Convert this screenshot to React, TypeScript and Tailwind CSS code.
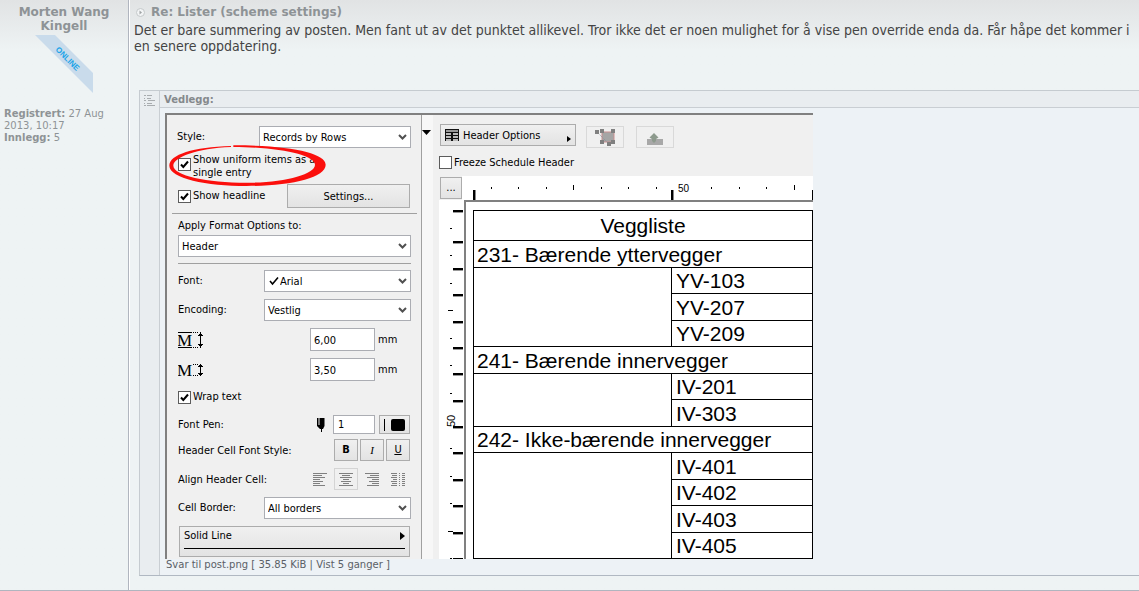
import React from "react";

function Chevron() {
  return (
    <svg className="pointer-events-none [grid-area:1/1] mr-1 justify-self-end" width="9" height="6" viewBox="0 0 9 6">
      <path d="M1 1 L4.5 4.5 L8 1" fill="none" stroke="#505050" strokeWidth="2" />
    </svg>
  );
}

function Select({ id, label, options, tick, className }: { id: string; label: string; options: string[]; tick?: boolean; className: string }) {
  return (
    <span className={"grid h-[22px] items-center " + className}>
      <select
        id={id}
        aria-label={label}
        className={"[grid-area:1/1] h-[22px] w-full appearance-none border border-[#abadb3] bg-white pt-px text-black " + (tick ? "pl-[15px]" : "pl-[3px]")}
      >
        {options.map((o) => (
          <option key={o}>{o}</option>
        ))}
      </select>
      {tick && (
        <svg className="pointer-events-none [grid-area:1/1] ml-[5px]" width="10" height="10" viewBox="0 0 10 10">
          <path d="M1 5 L3.5 8 L9 1.5" fill="none" stroke="#000" strokeWidth="1.6" />
        </svg>
      )}
      <Chevron />
    </span>
  );
}

function Check({ id, checked }: { id: string; checked?: boolean }) {
  return (
    <span className="grid size-[13px] shrink-0 place-items-center">
      <input id={id} type="checkbox" defaultChecked={checked} className="peer [grid-area:1/1] size-[13px] appearance-none border border-[#5c5c5c] bg-white" />
      <svg className="pointer-events-none invisible [grid-area:1/1] peer-checked:visible" width="9" height="9" viewBox="0 0 9 9">
        <path d="M1 4.5 L3.3 7 L8 1.5" fill="none" stroke="#000" strokeWidth="2" />
      </svg>
    </span>
  );
}

const btn = "flex items-center justify-center border border-[#acacac] bg-gradient-to-b from-[#f0f0f0] to-[#e3e3e3] text-black";

function SizeIcon({ full }: { full?: boolean }) {
  return (
    <svg width="26" height="18" viewBox="1 0 26 18" shapeRendering="crispEdges">
      <text x="0" y="15" fontSize="17" fontFamily="Liberation Serif, serif" fill="#000">M</text>
      {full ? (
        <g stroke="#000">
          <path d="M0 1.5H15M0 16.5H15" />
          <path d="M16 1.5H22M16 16.5H22" strokeDasharray="1 1" />
          <path d="M23.5 1V17M22 3.5H25M22 14.5H25M21 4.5H26M21 13.5H26" />
        </g>
      ) : (
        <g stroke="#000">
          <path d="M16 3.5H22M16 14.5H22" strokeDasharray="1 1" />
          <path d="M23.5 3V15M22 4.5H25M22 13.5H25M21 5.5H26M21 12.5H26" />
        </g>
      )}
    </svg>
  );
}

function AlignIcon({ d }: { d: string }) {
  return (
    <svg width="14" height="13" viewBox="0 0 14 13" shapeRendering="crispEdges">
      <path d={d} stroke="#808080" fill="none" />
    </svg>
  );
}

const alignments = [
  { name: "Align left", d: "M0 .5H14M0 2.5H9M0 4.5H12M0 6.5H7M0 8.5H10M0 10.5H7M0 12.5H12" },
  { name: "Align center", d: "M0 .5H14M3 2.5H11M1 4.5H13M4 6.5H10M2 8.5H12M4 10.5H10M0 12.5H14" },
  { name: "Align right", d: "M0 .5H14M5 2.5H14M2 4.5H14M7 6.5H14M4 8.5H14M7 10.5H14M2 12.5H14" },
  { name: "Justify", d: "M0 .5H6M1 2.5H6M0 4.5H6M2 6.5H6M0 8.5H6M1 10.5H6M0 12.5H6M8 .5H9M8 2.5H9M8 4.5H9M8 6.5H9M8 8.5H9M8 10.5H9M8 12.5H9M11 .5H14M11 2.5H14M11 4.5H14M11 6.5H14M11 8.5H14M11 10.5H14M11 12.5H14" },
];

function FormatPanel() {
  return (
    <div className="relative w-[254px] shrink-0 pt-[11px] pb-[2px]">
      <div className="flex items-center justify-between pr-[10px] pl-[10px]">
        <label htmlFor="style">Style:</label>
        <Select id="style" label="Style" options={["Records by Rows"]} className="w-[152px]" />
      </div>
      <div className="mt-[5px] flex items-start gap-[2px] pl-[11px]">
        <span className="pt-[5px]"><Check id="uniform" checked /></span>
        <label htmlFor="uniform" className="w-[124px] leading-[13px]">Show uniform items as a single entry</label>
      </div>
      <div className="mt-[5px] flex items-center justify-between pr-[11px] pl-[11px]">
        <span className="flex items-center gap-[2px]">
          <Check id="headline" checked />
          <label htmlFor="headline">Show headline</label>
        </span>
        <button className={btn + " h-6 w-[123px] pt-px"}>Settings...</button>
      </div>
      <hr className="mt-[5px] mr-[4px] ml-[5px] border-[#a0a0a0]" />
      <div className="pr-[10px] pl-[11px]">
        <label htmlFor="apply" className="mt-1 block h-4 leading-4">Apply Format Options to:</label>
        <Select id="apply" label="Apply Format Options to" options={["Header"]} className="mt-px w-full" />
        <hr className="mt-[6px] border-[#a0a0a0]" />
        <div className="mt-[6px] flex items-center justify-between">
          <label htmlFor="font">Font:</label>
          <Select id="font" label="Font" options={["Arial"]} tick className="w-[147px]" />
        </div>
        <div className="mt-[7px] flex items-center justify-between">
          <label htmlFor="enc">Encoding:</label>
          <Select id="enc" label="Encoding" options={["Vestlig"]} className="w-[147px]" />
        </div>
        <div className="mt-[7px] flex h-[23px] items-center">
          <label htmlFor="h1" className="flex-1" aria-label="Row height"><SizeIcon full /></label>
          <input id="h1" defaultValue="6,00" className="h-[23px] w-[65px] border border-[#abadb3] bg-white px-[3px] pt-px" />
          <span className="w-[36px] pl-[3px]">mm</span>
        </div>
        <div className="mt-[7px] flex h-[23px] items-center">
          <label htmlFor="h2" className="flex-1" aria-label="Letter height"><SizeIcon /></label>
          <input id="h2" defaultValue="3,50" className="h-[23px] w-[65px] border border-[#abadb3] bg-white px-[3px] pt-px" />
          <span className="w-[36px] pl-[3px]">mm</span>
        </div>
        <div className="mt-2 flex h-4 items-center gap-[2px]">
          <Check id="wrap" checked />
          <label htmlFor="wrap">Wrap text</label>
        </div>
        <div className="mt-[10px] flex h-[19px] items-center">
          <label htmlFor="pen" className="flex-1">Font Pen:</label>
          <svg width="8" height="14" viewBox="0 0 8 14" className="mr-[8px]">
            <path d="M0 0H1.5V7H2.5V0H7.5V8L6 11H5V14H4V11H3L0 8Z" />
          </svg>
          <input id="pen" defaultValue="1" className="h-[19px] w-[42px] border border-[#abadb3] bg-white px-[4px]" />
          <button aria-label="Pen color" className={btn + " ml-1 h-[19px] w-[31px] gap-[6px]"}>
            <span className="h-3 w-px bg-black" />
            <span className="h-3 w-[14px] rounded-[2px] bg-black" />
          </button>
          <span className="w-px" />
        </div>
        <div className="mt-[5px] flex h-[22px] items-center gap-[2px] pr-px">
          <span className="flex-1 pt-[2px]">Header Cell Font Style:</span>
          <button className={btn + " h-[22px] w-6 font-bold"}>B</button>
          <button className={btn + " h-[22px] w-6 font-['Liberation_Serif',serif] italic"}>I</button>
          <button className={btn + " h-[22px] w-6 underline"}>U</button>
        </div>
        <div className="mt-[7px] flex h-[22px] items-center gap-[2px] pr-px">
          <span className="flex-1 pt-[2px]">Align Header Cell:</span>
          {alignments.map((a, i) => (
            <button key={a.name} aria-label={a.name} className={"flex h-[22px] w-6 items-center justify-center border " + (i === 1 ? "border-[#d4d4d4]" : "border-transparent")}>
              <AlignIcon d={a.d} />
            </button>
          ))}
        </div>
        <div className="mt-[7px] flex items-center justify-between">
          <label htmlFor="border">Cell Border:</label>
          <Select id="border" label="Cell Border" options={["All borders"]} className="w-[147px]" />
        </div>
        <button className="mt-[7px] mr-px ml-px block h-[31px] w-[231px] border border-[#acacac] bg-gradient-to-b from-[#f0f0f0] to-[#e3e3e3] px-1 text-left">
          <span className="flex h-4 items-center justify-between">
            Solid Line
            <svg width="5" height="8" viewBox="0 0 5 8"><path d="M0 0L5 4L0 8Z" /></svg>
          </span>
          <span className="mt-1 mb-[7px] block h-px bg-black" />
        </button>
      </div>
      <svg className="pointer-events-none absolute top-[29px] left-[2px]" width="158" height="44" viewBox="117 178 474 132">
        <path fill="#fb0f0c" d="M303 184C190 187 118 210 118 243C118 281 230 304 350 304C480 304 587 280 587 240C587 205 480 182 310 182V187C450 187 555 212 555 240C555 270 460 294 350 294C230 294 130 272 130 243C130 218 200 191 303 187Z" />
      </svg>
    </div>
  );
}

const groups = [
  { title: "231- Bærende yttervegger", items: ["YV-103", "YV-207", "YV-209"] },
  { title: "241- Bærende innervegger", items: ["IV-201", "IV-303"] },
  { title: "242- Ikke-bærende innervegger", items: ["IV-401", "IV-402", "IV-403", "IV-405"] },
];

function Schedule() {
  const cell = "border-t border-l border-black p-0 text-left font-normal leading-[25px]";
  const row = "h-[26px] even:h-[27px]";
  return (
    <table className="w-[340px] table-fixed border-separate border-spacing-0 border-r border-b border-black font-['Liberation_Sans',Arial,sans-serif] text-[21px] text-black">
      <colgroup>
        <col className="w-[198px]" />
        <col />
      </colgroup>
      <tbody>
        <tr className="h-[30px]">
          <th colSpan={2} className="border-t border-l border-black p-0 text-center leading-[29px] font-normal">Veggliste</th>
        </tr>
        {groups.map((g) => (
          <React.Fragment key={g.title}>
            <tr className={row}>
              <th colSpan={2} className={cell + " pl-[3px]"}>{g.title}</th>
            </tr>
            {g.items.map((it, i) => (
              <tr key={it} className={row}>
                {i === 0 && <td rowSpan={g.items.length} className={cell} />}
                <td className={cell + " pl-1"}>{it}</td>
              </tr>
            ))}
          </React.Fragment>
        ))}
      </tbody>
    </table>
  );
}

const majorY = [10, 41, 68, 94, 121, 147, 173, 200, 226, 252, 279, 305, 332, 358];
const dotY = [28, 55, 83, 138, 165, 193, 248, 276, 303, 358];
const dotX = [29, 56, 84, 139, 166, 194, 249, 277, 304];

function SchedulePanel() {
  return (
    <div className="flex min-w-0 flex-1 flex-col pt-[9px]">
      <div className="flex items-start pl-[7px]">
        <button className={btn + " h-[22px] w-[136px] pr-1 pl-1"}>
          <svg width="14" height="12" viewBox="0 0 14 12" shapeRendering="crispEdges">
            <path d="M0 0H14V12H0Z" fill="#111" />
            <path d="M1 1H13V3H1Z" fill="#999" />
            <path d="M1 4H6V6H1ZM8 4H13V6H8ZM1 7H6V9H1ZM8 7H13V9H8ZM1 10H6V12H1ZM8 10H13V12H8Z" fill="#bbb" />
          </svg>
          <span className="flex-1 pt-px pl-1 text-left">Header Options</span>
          <svg className="mt-[7px]" width="4" height="6" viewBox="0 0 4 6"><path d="M0 0L4 3L0 6Z" /></svg>
        </button>
        <button aria-label="Select in model" className="mt-[2px] ml-[10px] flex h-[22px] w-[38px] items-center justify-center border border-[#d9d9d9]">
          <svg width="21" height="17" viewBox="0 0 21 17">
            <path d="M7 3H19V13H7Z" fill="#a5a5a5" stroke="#c98f8f" />
            <path d="M2 3L14 15" stroke="#8a8f9c" strokeDasharray="1 1" />
            <path d="M0 1H4V5H0ZM5 0H9V4H5ZM16 0H20V4H16ZM5 11H9V15H5ZM16 11H20V15H16ZM12 13H16V17H12Z" fill="#808080" />
          </svg>
        </button>
        <button aria-label="Zoom to element" className="mt-[2px] ml-[12px] flex h-[22px] w-[38px] items-center justify-center border border-[#d9d9d9] pt-[2px]">
          <svg width="16" height="13" viewBox="0 0 16 13">
            <path d="M0 7H16V13H0Z" fill="#a8a8a8" />
            <path d="M7 1L11.5 5.5L9 7V9L7 11L5 9V7L2.500 5.500Z" fill="#8d9a8d" />
          </svg>
        </button>
      </div>
      <div className="mt-2 flex h-[13px] items-center gap-[2px] pl-[6px]">
        <Check id="freeze" />
        <label htmlFor="freeze">Freeze Schedule Header</label>
      </div>
      <div className="mt-[7px] flex h-6 pl-[6px]">
        <button className={btn + " mt-px ml-px h-[22px] w-[22px] shrink-0"}>...</button>
        <svg className="flex-1 bg-white" width="351" height="24" viewBox="0 0 351 24" shapeRendering="crispEdges">
          {dotX.map((x) => <path key={x} d={`M${x} 11h1v2h-1z`} />)}
          <path d="M111 9h1v5h-1zM332 9h1v5h-1z" />
          <path d="M11 14h2v10h-2zM209 14h2v10h-2zM350 14h1v10h-1z" />
          <path d="M13 14h1v10h-1zM211 14h1v10h-1z" fill="#888" />
          <text x="216" y="16" fontSize="10" fontFamily="Liberation Sans, Arial, sans-serif">50</text>
        </svg>
      </div>
      <div className="flex pl-[6px]">
        <svg className="shrink-0 bg-white" width="25" height="359" viewBox="0 0 25 359" shapeRendering="crispEdges">
          {majorY.map((y) => <path key={y} d={`M14 ${y}h10v2h-10z`} />)}
          {majorY.map((y) => <path key={y} d={`M14 ${y + 2}h10v1h-10z`} fill="#999" />)}
          {dotY.map((y) => <path key={y} d={`M11 ${y}h2v1h-2z`} />)}
          <path d="M9 110h5v1h-5zM9 331h5v1h-5z" />
          <text transform="translate(16 227) rotate(-90)" fontSize="11" fontFamily="Liberation Sans, Arial, sans-serif">50</text>
        </svg>
        <div className="flex-1 border-t-2 border-l-2 border-[#808080] bg-white pt-2 pl-[7px]">
          <Schedule />
        </div>
      </div>
    </div>
  );
}

export default function App() {
  return (
    <div className="flex min-h-[591px] border-b border-[#b0b5bf] bg-[#eef3f4] bg-linear-to-b from-[#e1e3e4] via-[#eef3f4] via-[50px] to-[#eef3f4] font-['DejaVu_Sans',Verdana,sans-serif]">
      <aside className="w-[129px] shrink-0 border-r border-[#b0b5bf] pt-[5px] text-[11px] text-[#8e9396]">
        <div className="text-center text-[12px] leading-[14px] font-bold">Morten Wang<br />Kingell</div>
        <svg className="mt-[2px] ml-[35px] block" width="58" height="58" viewBox="0 0 58 58">
          <path d="M0 0H20L58 38V58Z" fill="#c9dbeb" />
          <text transform="translate(20 15) rotate(45)" fontSize="8" fontWeight="bold" fontFamily="Liberation Sans, Arial, sans-serif" fill="#20a4e8">ONLINE</text>
        </svg>
        <div className="mt-[15px] pl-1 text-[10px] leading-[12px]">
          <b>Registrert:</b> 27 Aug<br />2013, 10:17<br />
          <b>Innlegg:</b> 5
        </div>
      </aside>
      <main className="min-w-0 flex-1 border-l border-white pt-[4px]">
        <h1 className="flex h-4 items-center gap-[6px] pl-[6px] text-[12px] font-bold text-[#8e9396]">
          <svg width="9" height="9" viewBox="0 0 9 9">
            <circle cx="4.5" cy="4.5" r="4" fill="#f2f4f5" stroke="#c4c8ca" />
            <path d="M3.500 2.500L6 4.500L3.500 6.500Z" fill="#a0a4a6" />
          </svg>
          Re: Lister (scheme settings)
        </h1>
        <p className="mt-[2px] pr-1 pl-1 font-['DejaVu_Sans_Condensed',Verdana,sans-serif] text-[14px] leading-4 text-[#444]">
          Det er bare summering av posten. Men fant ut av det punktet allikevel. Tror ikke det er noen mulighet for å vise pen override enda da. Får håpe det kommer i en senere oppdatering.
        </p>
        <section className="mt-9 ml-[9px] flex border-y border-l border-[#c5cbd0] border-b-[#b0b8c2]">
          <div className="w-5 shrink-0 border-r border-[#c9ced3] bg-[#e9edf0] pt-1 pl-1">
            <svg width="11" height="11" viewBox="0 0 11 11" shapeRendering="crispEdges">
              <path d="M0 .5H2M3 .5H8M0 3.5H1M3 3.5H7M0 5.5H2M4 5.5H11M0 8.5H1M3 8.5H8M0 10.5H2M3 10.5H11" stroke="#a8acaf" />
            </svg>
          </div>
          <div className="min-w-0 flex-1 bg-[#edf2f6]">
            <h2 className="h-[17px] border-b border-[#c9ced3] bg-[#e9edf0] pt-px pl-1 text-[10px] leading-4 font-bold text-[#85898c]">Vedlegg:</h2>
            <figure className="mt-[5px] pl-[5px]">
              <div className="flex w-[648px] border-t-2 border-l-2 border-[#808080] bg-[#f0f0f0] font-['DejaVu_Sans_Condensed',Tahoma,sans-serif] text-[11px] leading-4 text-black">
                <FormatPanel />
                <div className="w-3 shrink-0 border-l border-[#a0a0a0] bg-[#f7f7f7] pt-[15px]">
                  <svg width="9" height="5" viewBox="0 0 9 5"><path d="M0 0H9L4.500 5Z" /></svg>
                </div>
                <SchedulePanel />
              </div>
              <figcaption className="h-4 pl-px text-[10px] leading-3 text-[#5a6066]">Svar til post.png [ 35.85 KiB | Vist 5 ganger ]</figcaption>
            </figure>
          </div>
        </section>
      </main>
    </div>
  );
}
